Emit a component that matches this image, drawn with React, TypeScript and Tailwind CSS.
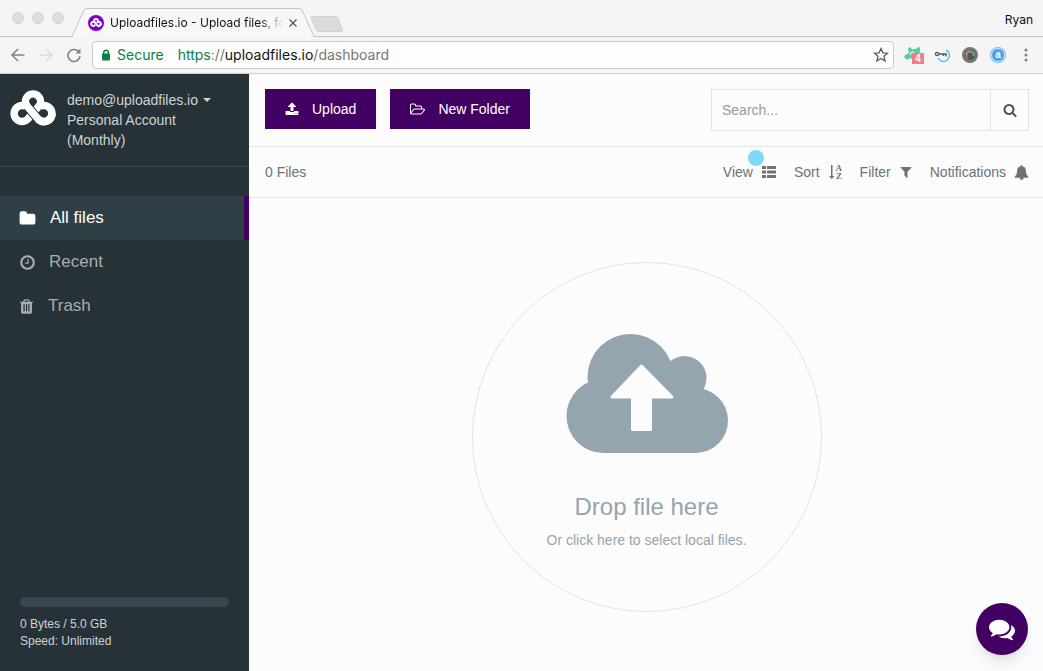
import React from "react";

const FA = {
  upload: "M1344 1472q0-26-19-45t-45-19-45 19-19 45 19 45 45 19 45-19 19-45zm256 0q0-26-19-45t-45-19-45 19-19 45 19 45 45 19 45-19 19-45zm128-224v320q0 40-28 68t-68 28h-1472q-40 0-68-28t-28-68v-320q0-40 28-68t68-28h427q21 56 70.5 92t110.5 36h256q61 0 110.5-36t70.5-92h427q40 0 68 28t28 68zm-325-648q-17 40-59 40h-256v448q0 26-19 45t-45 19h-256q-26 0-45-19t-19-45v-448h-256q-42 0-59-40-17-39 14-69l448-448q18-19 45-19t45 19l448 448q31 30 14 69z",
  folderOpen: "M1845 931q0-35-53-35h-1088q-40 0-85.5 21.5t-71.5 52.5l-294 363q-18 24-18 40 0 35 53 35h1088q40 0 86-22t71-53l294-363q18-22 18-39zm-1141-163h768v-160q0-40-28-68t-68-28h-576q-40 0-68-28t-28-68v-64q0-40-28-68t-68-28h-320q-40 0-68 28t-28 68v853l256-315q44-53 116-87.5t140-34.5zm1269 163q0 62-46 120l-295 363q-43 53-116 87.5t-140 34.5h-1088q-92 0-158-66t-66-158v-960q0-92 66-158t158-66h320q92 0 158 66t66 158v32h544q92 0 158 66t66 158v160h192q54 0 99 24.5t67 70.5q15 32 15 68z",
  folder: "M1728 608v704q0 92-66 158t-158 66h-1216q-92 0-158-66t-66-158v-960q0-92 66-158t158-66h320q92 0 158 66t66 158v32h672q92 0 158 66t66 158z",
  clock: "M1024 544v448q0 14-9 23t-23 9h-320q-14 0-23-9t-9-23v-64q0-14 9-23t23-9h224v-352q0-14 9-23t23-9h64q14 0 23 9t9 23zm416 352q0-148-73-273t-198-198-273-73-273 73-198 198-73 273 73 273 198 198 273 73 273-73 198-198 73-273zm224 0q0 209-103 385.5t-279.5 279.5-385.5 103-385.5-103-279.5-279.5-103-385.5 103-385.5 279.5-279.5 385.5-103 385.5 103 279.5 279.5 103 385.5z",
  trash: "M704 1376v-704q0-14-9-23t-23-9h-64q-14 0-23 9t-9 23v704q0 14 9 23t23 9h64q14 0 23-9t9-23zm256 0v-704q0-14-9-23t-23-9h-64q-14 0-23 9t-9 23v704q0 14 9 23t23 9h64q14 0 23-9t9-23zm256 0v-704q0-14-9-23t-23-9h-64q-14 0-23 9t-9 23v704q0 14 9 23t23 9h64q14 0 23-9t9-23zm-544-992h448l-48-117q-7-9-17-11h-317q-10 2-17 11zm928 32v64q0 14-9 23t-23 9h-96v948q0 83-47 143.5t-113 60.5h-832q-66 0-113-58.5t-47-141.5v-952h-96q-14 0-23-9t-9-23v-64q0-14 9-23t23-9h309l70-167q15-37 54-63t79-26h320q40 0 79 26t54 63l70 167h309q14 0 23 9t9 23z",
  search: "M1216 832q0-185-131.5-316.5t-316.5-131.5-316.5 131.5-131.5 316.5 131.5 316.5 316.5 131.5 316.5-131.5 131.5-316.5zm512 832q0 52-38 90t-90 38q-54 0-90-38l-343-342q-179 124-399 124-143 0-273.5-55.5t-225-150-150-225-55.5-273.5 55.5-273.5 150-225 225-150 273.5-55.5 273.5 55.5 225 150 150 225 55.5 273.5q0 220-124 399l343 343q37 37 37 90z",
  filter: "M1595 295q17 41-14 70l-493 493v742q0 42-39 59-13 5-25 5-27 0-45-19l-256-256q-19-19-19-45v-486l-493-493q-31-29-14-70 17-39 59-39h1280q42 0 59 39z",
  bell: "M912 1696q0-16-16-16-59 0-101.5-42.5t-42.5-101.5q0-16-16-16t-16 16q0 73 51.5 124.5t124.5 51.5q16 0 16-16zm816-288q0 52-38 90t-90 38h-448q0 106-75 181t-181 75-181-75-75-181h-448q-52 0-90-38t-38-90q50-42 91-88t85-119.5 74.5-158.5 50-206 19.5-260q0-152 117-282.5t307-158.5q-8-19-8-39 0-40 28-68t68-28 68 28 28 68q0 20-8 39 190 28 307 158.5t117 282.5q0 139 19.5 260t50 206 74.5 158.5 85 119.5 91 88z",
  comments: "M1408 768q0 139-94 257t-256.5 186.5-353.5 68.5q-86 0-176-16-124 88-278 128-36 9-86 16h-3q-11 0-20.5-8t-11.5-21q-1-3-1-6.5t.5-6.5 2-6l2.5-5 3.5-5.5 4-5 4.5-5 4-4.5q5-6 23-25t26-29.5 22.5-29 25-38.5 20.5-44q-124-72-195-177t-71-224q0-139 94-257t256.5-186.5 353.5-68.5 353.5 68.5 256.5 186.5 94 257zm384 256q0 120-71 224.5t-195 176.5q10 24 20.5 44t25 38.5 22.5 29 26 29.5 23 25q1 1 4 4.5t4.5 5 4 5 3.5 5.5l2.5 5 2 6 .5 6.5-1 6.5q-3 14-13 22t-22 7q-50-7-86-16-154-40-278-128-90 16-176 16-271 0-472-132 58 4 88 4 161 0 309-45t264-129q125-92 192-212t67-254q0-77-23-152 129 71 204 178t75 230z",
};

function Icon({ name, className }: { name: keyof typeof FA; className: string }) {
  return (
    <svg viewBox={name === "folderOpen" ? "64 0 1920 1792" : "0 0 1792 1792"} className={`shrink-0 fill-current ${className}`} aria-hidden="true">
      <path d={FA[name]} />
    </svg>
  );
}

function Logo({ className, gap }: { className: string; gap: string }) {
  return (
    <svg viewBox="0 0 46 36" className={className} fill="none" aria-hidden="true">
      <path d="M28.300 17.800 A8 8 0 1 1 28.300 29.200" stroke="currentColor" strokeWidth="7.600" />
      <path d="M22 24.200 L28.500 16.500" stroke={gap} strokeWidth="9.400" />
      <path d="M17.700 17.800 A8 8 0 1 0 17.700 29.200 L28.500 16.500 A7.500 7.500 0 1 0 17.500 16.500" stroke="currentColor" strokeWidth="7.400" />
      <path d="M17.500 16.500 L28.300 29.200" stroke={gap} strokeWidth="9.400" />
      <path d="M15.500 11 A7.500 7.500 0 0 0 17.500 16.500 L28.300 29.200 A8 8 0 0 0 42 23.500" stroke="currentColor" strokeWidth="7.400" />
    </svg>
  );
}

function BrowserChrome() {
  return (
    <header className="shrink-0 bg-[#f5f5f6] text-[#111]">
      <div className="flex h-[37px] items-end border-b border-[#c4c4c4]">
        <div className="mb-3 ml-3 flex gap-2" aria-hidden="true">
          <span className="size-3 rounded-full border border-[#d2d2d2] bg-[#dedede]" />
          <span className="size-3 rounded-full border border-[#d2d2d2] bg-[#dedede]" />
          <span className="size-3 rounded-full border border-[#d2d2d2] bg-[#dedede]" />
        </div>
        <div className="relative -mb-px ml-2 h-[29px] w-[242px]">
          <svg className="absolute inset-0 h-full w-full" viewBox="0 0 242 29" aria-hidden="true">
            <path d="M0 28.500 L12 2 Q13 .5 15 .5 H226 Q229 .5 230 2 L242 28.500" fill="#f7f7f8" stroke="#c4c4c4" />
            <path d="M1 28.500 H241" stroke="#f7f7f8" />
          </svg>
          <div className="relative flex h-full items-center pl-4 pr-[15px]">
            <span className="flex size-4 shrink-0 items-center justify-center rounded-full bg-[#7f00c9] text-white">
              <Logo className="h-[9px] w-3" gap="#7f00c9" />
            </span>
            <span className="ml-1.5 min-w-0 flex-1 overflow-hidden whitespace-nowrap bg-linear-to-r from-[#111] from-85% to-[#eee] bg-clip-text font-[Inter,sans-serif] text-xs text-transparent">Uploadfiles.io - Upload files, for</span>
            <button aria-label="Close tab" className="ml-1 flex size-3 items-center justify-center">
              <svg viewBox="0 0 8 8" className="size-2" stroke="#555" strokeWidth="1.300" aria-hidden="true"><path d="M.5 .5 L7.500 7.500 M7.500 .5 L.5 7.500" /></svg>
            </button>
          </div>
        </div>
        <button aria-label="New tab" className="-ml-1 mb-1">
          <svg viewBox="0 0 34 16" className="h-4 w-[34px]" aria-hidden="true"><path d="M2 .5 H25 Q27 .5 28 2.500 L32.500 14 Q33 15.500 31 15.500 H9 Q7 15.500 6 13.500 L1 2 Q.5 .5 2 .5Z" fill="#dcdbdc" stroke="#d2d2d2" /></svg>
        </button>
        <span className="mb-1.5 ml-auto mr-2.5 font-[Inter,sans-serif] text-xs leading-5">Ryan</span>
      </div>
      <div className="flex h-[37px] items-center border-b border-[#cfcfd1]">
        <div className="ml-2.5 flex w-[82px] shrink-0 items-center gap-3">
          <button aria-label="Back"><svg viewBox="0 0 16 16" className="size-4" fill="none" stroke="#828282" strokeWidth="1.500" aria-hidden="true"><path d="M14.500 8 H2 M8 2 L2 8 L8 14" /></svg></button>
          <button aria-label="Forward"><svg viewBox="0 0 16 16" className="size-4" fill="none" stroke="#dcdcdc" strokeWidth="1.500" aria-hidden="true"><path d="M1.500 8 H14 M8 2 L14 8 L8 14" /></svg></button>
          <button aria-label="Reload"><svg viewBox="0 0 16 16" className="size-4" fill="none" stroke="#828282" strokeWidth="1.600" aria-hidden="true"><path d="M14 9 A6 6 0 1 1 12.500 4.500" /><path d="M9.500 6.500 H14.500 V1.500Z" fill="#828282" stroke="none" /></svg></button>
        </div>
        <div className="flex h-7 min-w-0 flex-1 items-center rounded border border-[#cbcbcd] bg-[#fdfdfd] pl-[7px] pr-1 font-[Inter,sans-serif] text-sm">
          <svg viewBox="0 0 10 12" className="ml-px h-3 w-2.5 shrink-0" aria-hidden="true"><path d="M2.700 6 V3.500 A2.300 2.300 0 0 1 7.300 3.500 V6" fill="none" stroke="#0b8043" strokeWidth="1.400" /><rect x="1" y="4.500" width="8" height="7" rx=".7" fill="#0b8043" /></svg>
          <span className="ml-1.5 text-[#0b8043]">Secure</span>
          <span className="ml-3.5 min-w-0 flex-1 whitespace-nowrap text-[#777]"><span className="text-[#0b8043]">https</span>://<span className="text-[#111]">uploadfiles.io</span>/dashboard</span>
          <button aria-label="Bookmark"><svg viewBox="0 0 16 16" className="size-4" fill="none" stroke="#5b5b5b" strokeWidth="1.300" aria-hidden="true"><path d="M8 1.500 L9.900 5.800 L14.600 6.200 L11 9.300 L12.100 14 L8 11.500 L3.900 14 L5 9.300 L1.400 6.200 L6.100 5.800Z" /></svg></button>
        </div>
        <div className="ml-2.5 mr-[7px] flex shrink-0 items-center gap-2">
          <button aria-label="Extension, 4 alerts" className="relative size-5">
            <svg viewBox="0 0 20 20" className="size-5" aria-hidden="true"><path d="M4 3 Q6 1 8 4 Q11 5 13 3 Q15 1 16 3 V7 L12 12 Q9 15 6 13 Q3 16 1 13 L0 11 L5 8Z" fill="#52cf9b" /><path d="M6 10 Q8 5 10 8 Q10 11 8 11" fill="none" stroke="#f7f7f8" strokeWidth="1.200" /></svg>
            <span className="absolute left-2 top-2 flex h-[11px] w-3 items-center justify-center bg-[#f27b8c] text-[10px] font-bold leading-none text-white">4</span>
          </button>
          <button aria-label="Passwords"><svg viewBox="0 0 20 20" className="size-5" fill="none" aria-hidden="true"><path d="M14 5 A6 6 0 1 1 6 13" stroke="#55b6f4" strokeWidth="1.400" /><circle cx="5" cy="9" r="1.600" stroke="#555" strokeWidth="1.300" /><path d="M6.500 9 H14 V11.500 M11.500 9 V11" stroke="#555" strokeWidth="1.400" /></svg></button>
          <button aria-label="Camera"><svg viewBox="0 0 20 20" className="size-5" fill="none" aria-hidden="true"><circle cx="10" cy="10" r="8" fill="#757575" /><circle cx="10" cy="10" r="5" fill="#555" /><path d="M6.500 10 A3.500 3.500 0 0 1 10 6.500" stroke="#d48a65" strokeWidth="2" /><path d="M10 6.500 A3.500 3.500 0 0 1 13.500 11" stroke="#53b879" strokeWidth="2" /><path d="M8 13 A3.500 3.500 0 0 1 6.500 10" stroke="#a965b8" strokeWidth="2" /></svg></button>
          <button aria-label="Assistant" className="flex size-5 items-center justify-center"><span className="flex size-[14px] items-center justify-center rounded-full border border-[#d7eafb] bg-[#4b9fe8] text-[10px] font-bold leading-none text-white ring-1 ring-[#7fbdf0]">a</span></button>
          <button aria-label="Menu"><svg viewBox="0 0 20 20" className="size-5" fill="#808080" aria-hidden="true"><circle cx="10" cy="5" r="1.500" /><circle cx="10" cy="10" r="1.500" /><circle cx="10" cy="15" r="1.500" /></svg></button>
        </div>
      </div>
    </header>
  );
}

function Sidebar() {
  return (
    <aside className="flex w-[249px] shrink-0 flex-col bg-[#263238]">
      <div className="flex h-[93px] gap-[11px] border-b border-[#37444a] pl-2.5 pt-4 text-[#cfd2d3]">
        <Logo className="h-9 w-[46px] shrink-0 text-white" gap="#263238" />
        <div className="text-sm leading-5">
          <button className="flex items-center gap-[5px]">demo@uploadfiles.io <svg viewBox="0 0 8 4" className="h-1 w-2 fill-current" aria-hidden="true"><path d="M0 0H8L4 4Z" /></svg></button>
          <p>Personal Account<br />(Monthly)</p>
        </div>
      </div>
      <nav className="mt-[29px] text-[17px] text-[#a8adaf]">
        <a href="#all" className="flex h-11 items-center gap-3.5 border-r-[5px] border-[#430063] bg-[#2f3f46] pl-[19px] text-white"><Icon name="folder" className="size-[17px]" />All files</a>
        <a href="#recent" className="flex h-11 items-center gap-[13px] pl-[19px]"><Icon name="clock" className="size-[17px]" />Recent</a>
        <a href="#trash" className="flex h-11 items-center gap-[13px] pl-[18px]"><Icon name="trash" className="size-[17px]" />Trash</a>
      </nav>
      <div className="mt-auto px-5 pb-[21px] text-xs leading-[17px] text-[#d0d3d4]">
        <div role="progressbar" aria-label="Storage used" aria-valuenow={0} className="mb-[9px] h-2.5 rounded-full bg-[#37474f]" />
        <p>0 Bytes / 5.0 GB</p>
        <p>Speed: Unlimited</p>
      </div>
    </aside>
  );
}

function Toolbar() {
  return (
    <div className="flex h-[51px] shrink-0 items-center border-b border-[#dce5ee] pl-4 pr-3.5 text-sm text-[#6d7375]">
      <span>0 Files</span>
      <div className="ml-auto flex items-center gap-[17px]">
        <button className="relative flex items-center gap-2">View
          <svg viewBox="0 0 16 12" className="h-3 w-4 fill-current" aria-hidden="true"><rect x="1" y="0" width="4" height="3" rx=".5" /><rect x="6" y="0" width="9" height="3" rx=".5" /><rect x="1" y="4.500" width="4" height="3" rx=".5" /><rect x="6" y="4.500" width="9" height="3" rx=".5" /><rect x="1" y="9" width="4" height="3" rx=".5" /><rect x="6" y="9" width="9" height="3" rx=".5" /></svg>
          <span className="absolute -top-3 left-[25px] size-4 rounded-full bg-[#81d8fc]" />
        </button>
        <button className="flex items-center gap-2">Sort
          <svg viewBox="0 0 15 16" className="h-4 w-[15px] fill-current" aria-hidden="true"><path d="M3 1 H4.500 V12 H6.500 L3.750 15 L1 12 H3Z" /><text x="7.500" y="7" fontFamily="Liberation Serif" fontSize="9" fontWeight="700">A</text><text x="8" y="15" fontFamily="Liberation Serif" fontSize="9" fontWeight="700">Z</text></svg>
        </button>
        <button className="flex items-center gap-2">Filter<Icon name="filter" className="size-[14px]" /></button>
        <button className="flex items-center gap-2">Notifications<Icon name="bell" className="size-[15px]" /></button>
      </div>
    </div>
  );
}

export default function App() {
  return (
    <div className="flex min-h-screen flex-col bg-[#fcfcfc] font-['Liberation_Sans',Arial,sans-serif]">
      <BrowserChrome />
      <div className="flex flex-1">
        <Sidebar />
        <main className="relative flex min-w-0 flex-1 flex-col">
          <div className="flex h-[73px] shrink-0 items-start gap-3.5 border-b border-[#dce5ee] pl-4 pr-3.5 pt-[15px]">
            <button className="flex h-10 items-center gap-[13px] bg-[#430063] px-5 text-sm font-medium text-white"><Icon name="upload" className="size-[14px]" />Upload</button>
            <button className="flex h-10 items-center gap-[13px] bg-[#430063] px-5 text-sm font-medium text-white"><Icon name="folderOpen" className="size-[15px]" />New Folder</button>
            <form role="search" className="ml-auto flex h-[42px] w-[318px] border border-[#e1e4e7] text-sm" onSubmit={(event) => event.preventDefault()}>
              <input aria-label="Search files" placeholder="Search..." className="min-w-0 flex-1 bg-transparent px-2.5 outline-none placeholder:text-[#999]" />
              <button aria-label="Search" className="flex w-[38px] items-center justify-center border-l border-[#e1e4e7] text-[#505355]"><Icon name="search" className="size-[14px]" /></button>
            </form>
          </div>
          <Toolbar />
          <div className="flex flex-1 items-start justify-center pt-16">
            <button className="ml-px flex size-[350px] flex-col items-center rounded-full border border-[#dce5ee] pt-[71px] text-[#94a5af]">
              <svg viewBox="566 334 162 119" className="h-[119px] w-[162px]" aria-hidden="true">
                <g fill="currentColor"><circle cx="603.500" cy="416" r="37" /><circle cx="630.500" cy="377" r="43" /><circle cx="684.500" cy="378" r="22" /><circle cx="695.500" cy="420.500" r="32.500" /><path d="M603 382 L670 370 L696 390 V453 H603Z" /></g>
                <path d="M641.500 366 L672 397 H650.500 V429.500 H632.500 V397 H612Z" fill="#fcfcfc" stroke="#fcfcfc" strokeWidth="3" strokeLinejoin="round" />
              </svg>
              <span className="mt-9 text-2xl leading-9">Drop file here</span>
              <span className="mt-[5px] text-sm leading-5">Or click here to select local files.</span>
            </button>
          </div>
          <button aria-label="Chat" className="absolute bottom-4 right-[15px] flex size-[52px] items-center justify-center rounded-full bg-[#430063] text-white shadow-lg"><Icon name="comments" className="size-[26px]" /></button>
        </main>
      </div>
    </div>
  );
}
